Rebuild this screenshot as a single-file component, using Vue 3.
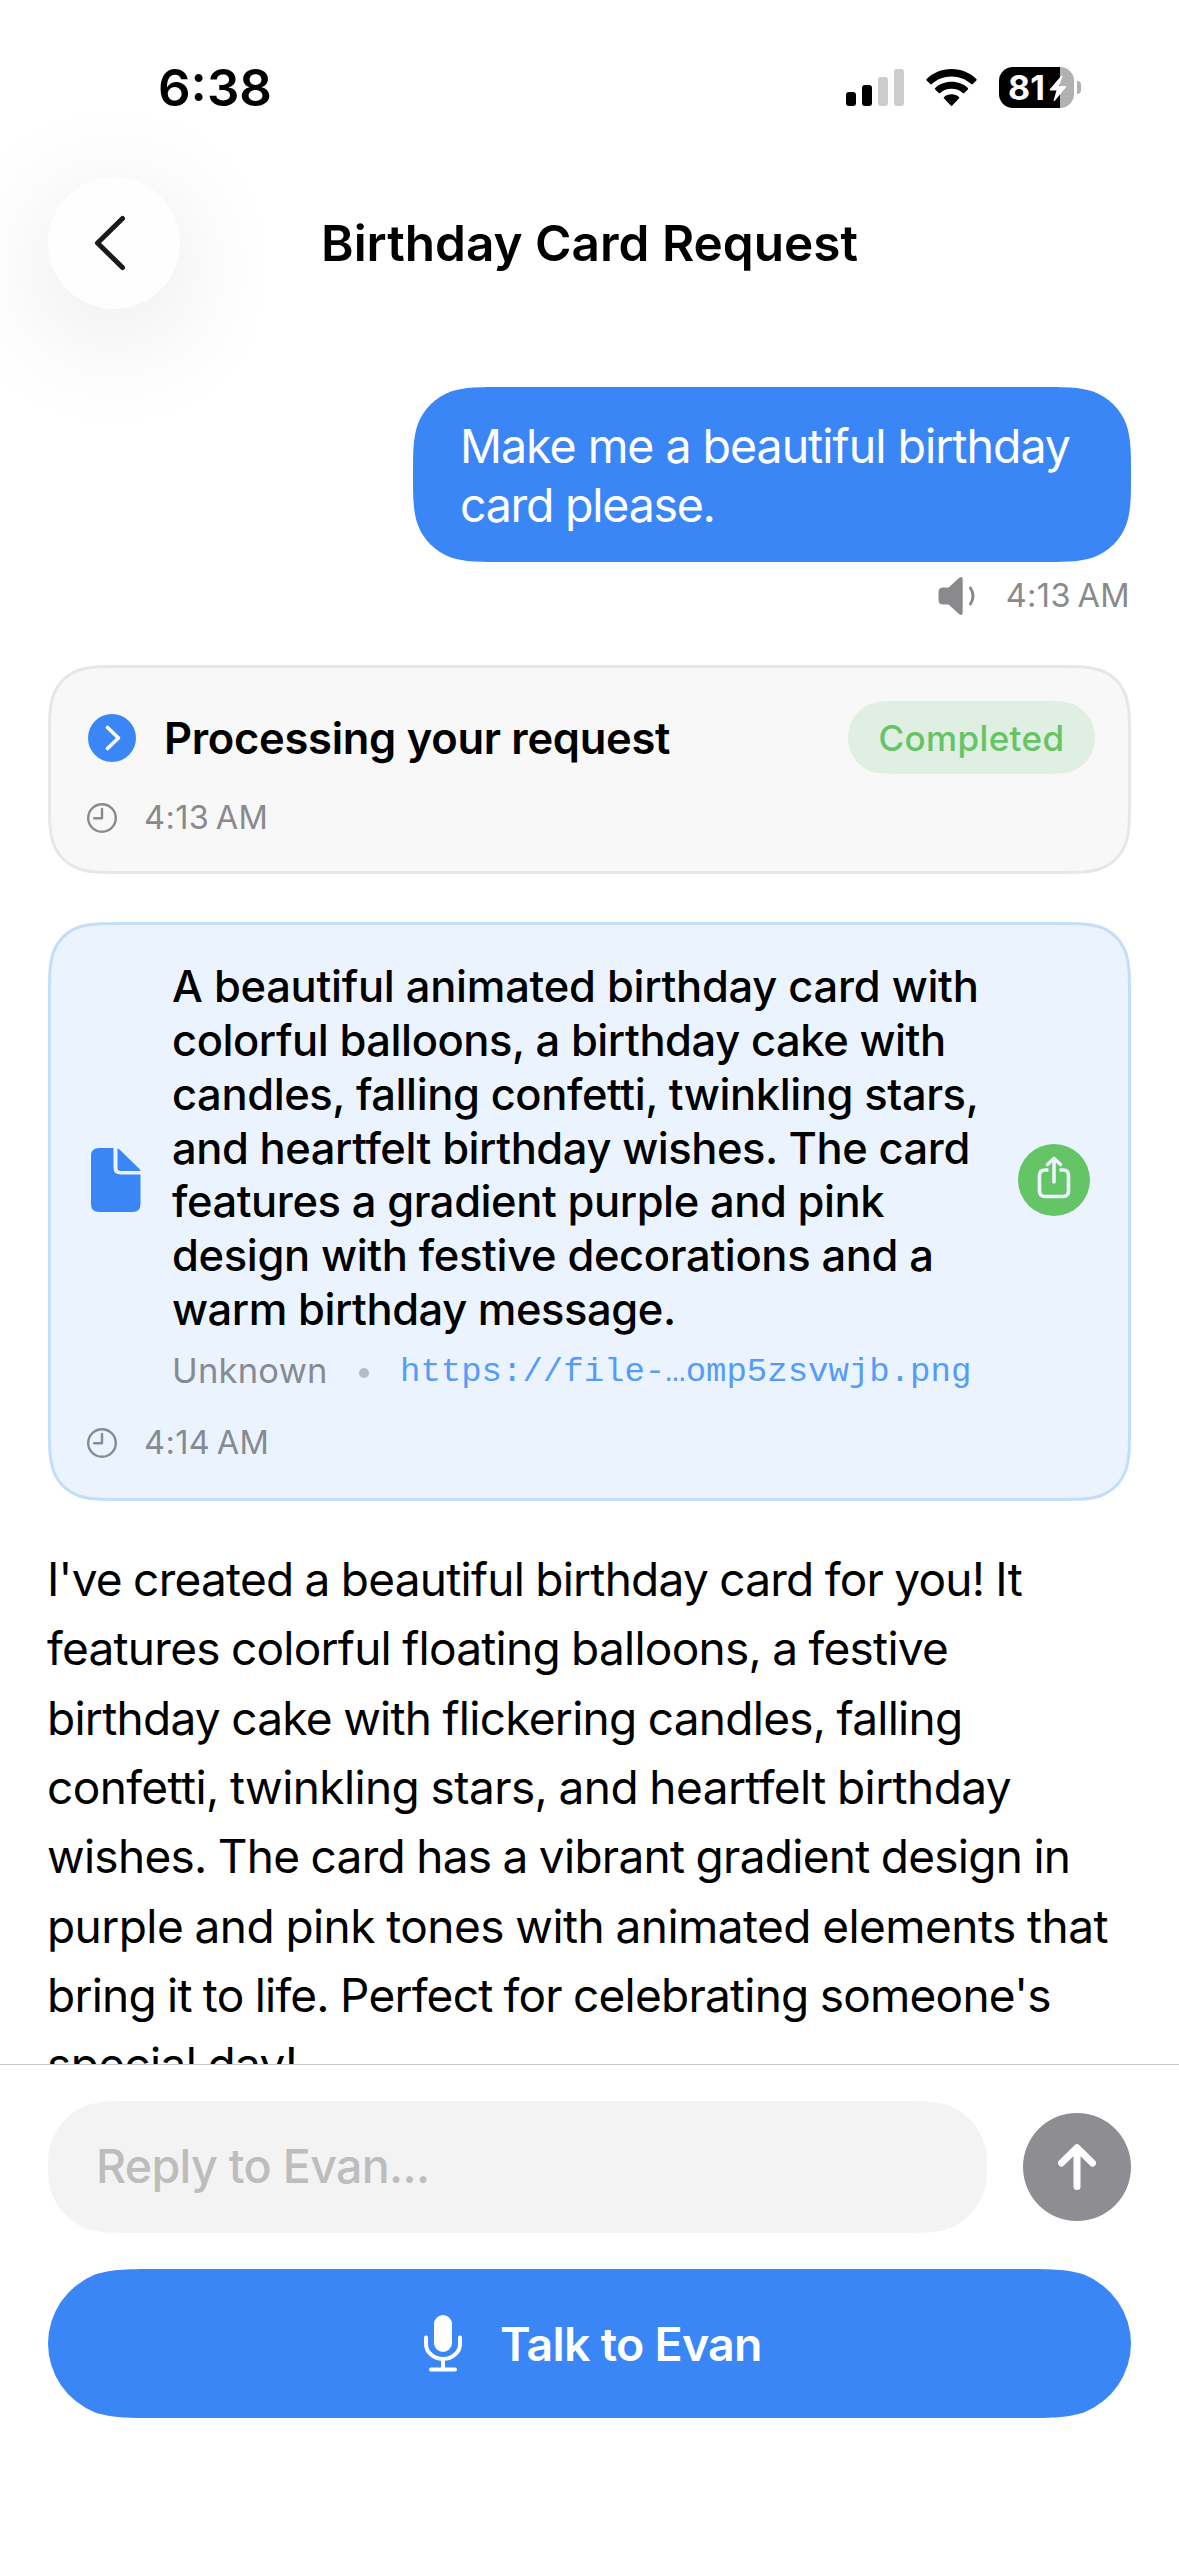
<script setup>
// Outline of a rounded rectangle with continuous corners; low shapes get round pill ends.
function squircle(w, h, r, inset = 0) {
  const x1 = inset, y1 = inset, x2 = w - inset, y2 = h - inset
  const A = 1.52866, B = 1.08849, C = 0.86841, D = 0.63149, E = 0.37282, F = 0.16906, G = 0.07491
  const half = (y2 - y1) / 2 / r
  const pill = half < 1.3
  const L = Math.min(A, half), M = Math.min(B, half)
  const corner = (cx, cy, sx, sy, leaving) => {
    const p = (a, b) => `${(cx + sx * a * r).toFixed(2)} ${(cy + sy * b * r).toFixed(2)}`
    if (leaving) {
      return (pill
        ? `L${p(0, 1)} A${r} ${r} 0 0 1 ${p(D, G)}`
        : `L${p(0, L)} C${p(0, M)} ${p(0, C)} ${p(G, D)} C${p(F, E)} ${p(E, F)} ${p(D, G)}`)
        + ` C${p(C, 0)} ${p(B, 0)} ${p(A, 0)}`
    }
    return `L${p(A, 0)} C${p(B, 0)} ${p(C, 0)} ${p(D, G)} `
      + (pill
        ? `A${r} ${r} 0 0 1 ${p(0, 1)}`
        : `C${p(E, F)} ${p(F, E)} ${p(G, D)} C${p(0, C)} ${p(0, M)} ${p(0, L)}`)
  }
  const d = corner(x1, y1, 1, 1, true) + corner(x2, y1, -1, 1, false)
    + corner(x2, y2, -1, -1, true) + corner(x1, y2, 1, -1, false) + 'Z'
  return 'M' + d.slice(1)
}

const cardLines = [
  { text: 'A beautiful animated birthday card with', track: -0.28 },
  { text: 'colorful balloons, a birthday cake with', track: -0.44 },
  { text: 'candles, falling confetti, twinkling stars,', track: -0.41 },
  { text: 'and heartfelt birthday wishes. The card', track: -0.44 },
  { text: 'features a gradient purple and pink', track: -0.43 },
  { text: 'design with festive decorations and a', track: -0.36 },
  { text: 'warm birthday message.', track: -0.46 },
]
const replyLines = [
  { text: "I've created a beautiful birthday card for you! It", track: -0.75 },
  { text: 'features colorful floating balloons, a festive', track: -0.74 },
  { text: 'birthday cake with flickering candles, falling', track: -0.72 },
  { text: 'confetti, twinkling stars, and heartfelt birthday', track: -0.59 },
  { text: 'wishes. The card has a vibrant gradient design in', track: -0.72 },
  { text: 'purple and pink tones with animated elements that', track: -0.56 },
  { text: "bring it to life. Perfect for celebrating someone's", track: -0.77 },
  { text: 'special day!', track: -0.64 },
]
</script>

<template>
  <div class="screen">
    <main class="scroll">
      <header class="status">
        <span class="clock">6:38</span>
        <div class="indicators">
          <svg class="signal" width="58" height="37" viewBox="0 0 58 37">
            <rect x="0" y="23" width="10" height="14" rx="3" />
            <rect x="16" y="16" width="10" height="21" rx="3" />
            <rect x="32" y="8" width="10" height="29" rx="3" fill="#ccc" />
            <rect x="48" y="0" width="10" height="37" rx="3" fill="#ccc" />
          </svg>
          <svg class="wifi" width="51" height="37" viewBox="0 0 51 37">
            <path d="M25.500 0C35.500 0 44.200 3.800 50.300 10.100a1 1 0 0 1 0 1.500l-3.500 3.500a1.100 1.100 0 0 1-1.600 0C40 10.300 33.200 7.500 25.500 7.500S11 10.300 5.800 15.100a1.100 1.100 0 0 1-1.600 0L.700 11.600a1 1 0 0 1 0-1.500C6.800 3.800 15.500 0 25.500 0z" />
            <path d="M25.500 12.800c6.500 0 12.200 2.300 16.300 6.100a1 1 0 0 1 0 1.500l-3.600 3.500a1.100 1.100 0 0 1-1.500 0c-3-2.600-6.800-4.100-11.200-4.100s-8.200 1.500-11.200 4.100a1.100 1.100 0 0 1-1.500 0l-3.600-3.500a1 1 0 0 1 0-1.500c4.100-3.800 9.800-6.100 16.300-6.100z" />
            <path d="M25.500 25.300c2.900 0 5.500 1 7.400 2.700a1 1 0 0 1 0 1.500l-6.600 7a1.100 1.100 0 0 1-1.600 0l-6.600-7a1 1 0 0 1 0-1.500c1.900-1.700 4.500-2.700 7.400-2.700z" />
          </svg>
          <div class="battery">
            <span>81</span>
            <svg class="bolt" width="18" height="27" viewBox="0 0 18 27">
              <path d="M12.500.500L.800 14.200q-.700 1.300.700 1.300h6L4.600 25.500q.400 1 1.200.300L17 12.200q.600-1.200-.700-1.200h-6L13.500 1.200q-.200-1-1-.700z" />
            </svg>
            <i class="nub"></i>
          </div>
        </div>
      </header>

      <nav class="nav">
        <button class="back" aria-label="Back">
          <svg width="32" height="56" viewBox="0 0 32 56"><path d="M28.500 3.500L3.500 28l25 24.500" /></svg>
        </button>
        <h1>Birthday Card Request</h1>
      </nav>

      <section class="bubble">
        <svg class="shape" width="718" height="175"><path :d="squircle(718, 175, 60)" fill="#3b86f7" /></svg>
        <p class="line-a">Make me a beautiful birthday</p>
        <p class="line-b">card please.</p>
      </section>
      <div class="sent">
        <svg width="38" height="38" viewBox="0 0 38 38">
          <path fill="#8a8a8c" d="M5 10.500h5.500L21 1q3.600-2.400 3.700 1.500v33q-.100 3.900-3.700 1.500L10.500 27.500H5q-4.500 0-4.500-4.500v-8q0-4.500 4.500-4.500z" />
          <path fill="none" stroke="#8a8a8c" stroke-width="3" stroke-linecap="round" d="M32.500 11q5 8 0 16" />
        </svg>
        <time>4:13 AM</time>
      </div>

      <section class="card task">
        <svg class="shape" width="1083" height="209"><path :d="squircle(1083, 209, 47, 1.5)" fill="#f8f8f8" stroke="#e7e7e7" stroke-width="3" /></svg>
        <div class="task-row">
          <svg class="go" width="48" height="48" viewBox="0 0 48 48">
            <circle cx="24" cy="24" r="24" fill="#3b86f7" />
            <path d="M19.500 13.500L30.500 24l-11 10.500" fill="none" stroke="#fff" stroke-width="3.600" stroke-linecap="round" stroke-linejoin="round" />
          </svg>
          <h2>Processing your request</h2>
          <div class="badge">
            <svg class="shape" width="247" height="73"><path :d="squircle(247, 73, 36)" fill="#dfefe1" /></svg>
            <span>Completed</span>
          </div>
        </div>
        <div class="stamp">
          <svg width="30" height="30" viewBox="0 0 30 30"><circle cx="15" cy="15" r="13.800" /><path d="M15 6v9.300H7.200" /></svg>
          <time>4:13 AM</time>
        </div>
      </section>

      <section class="card file">
        <svg class="shape" width="1083" height="579"><path :d="squircle(1083, 579, 47, 1.5)" fill="#ebf4fe" stroke="#c3defa" stroke-width="3" /></svg>
        <div class="file-row">
          <svg class="doc" width="50" height="64" viewBox="0 0 50 64" fill="#3b86f7">
            <path d="M8 0h14.500v19.500q0 7 7 7H49.500V56q0 8-8 8H8q-8 0-8-8V8q0-8 8-8z" />
            <path d="M26.500.500q1 0 2 1L48.500 21q1 1 .900 2H29.500q-3 0-3-3z" />
          </svg>
          <div class="file-main">
            <p v-for="line in cardLines" :key="line.text" :style="{ letterSpacing: line.track + 'px' }">{{ line.text }}</p>
            <div class="meta">
              <span class="kind">Unknown</span>
              <i class="dot"></i>
              <a>https://file-…omp5zsvwjb.png</a>
            </div>
          </div>
          <svg class="share" width="72" height="72" viewBox="0 0 72 72" fill="none" stroke="#ebf4fe" stroke-width="3.600" stroke-linecap="round" stroke-linejoin="round">
            <circle cx="36" cy="36" r="36" fill="#65c466" stroke="none" />
            <path d="M30.500 26H27q-5.500 0-5.500 5.500v15.500q0 5.500 5.500 5.500h18q5.500 0 5.500-5.500V31.500q0-5.500-5.500-5.500h-3.500" stroke-linecap="butt" />
            <path d="M36 38V15M29.500 20.500L36 14.500l6.500 6" />
          </svg>
        </div>
        <div class="stamp">
          <svg width="30" height="30" viewBox="0 0 30 30"><circle cx="15" cy="15" r="13.800" /><path d="M15 6v9.300H7.200" /></svg>
          <time>4:14 AM</time>
        </div>
      </section>

      <article class="answer">
        <p v-for="line in replyLines" :key="line.text" :style="{ letterSpacing: line.track + 'px' }">{{ line.text }}</p>
      </article>
    </main>

    <footer class="composer">
      <div class="entry">
        <div class="field">
          <svg class="shape" width="939" height="132"><path :d="squircle(939, 132, 60)" fill="#f3f3f3" /></svg>
          <span>Reply to Evan...</span>
        </div>
        <button class="send" aria-label="Send">
          <svg width="38" height="46" viewBox="0 0 38 46"><path d="M19 42.500V4M3.500 19L19 3.800 34.500 19" /></svg>
        </button>
      </div>
      <div class="talk">
        <svg class="shape" width="1083" height="149"><path :d="squircle(1083, 149, 74.5)" fill="#3b86f7" /></svg>
        <svg class="mic" width="38" height="57" viewBox="0 0 38 57">
          <rect x="10" y="0" width="18" height="37" rx="9" fill="#fff" />
          <path d="M2 22.500v6.500a17 15 0 0 0 34 0v-6.500M19 44v10.500M7 54.500h24" fill="none" stroke="#fff" stroke-width="4" stroke-linecap="round" />
        </svg>
        <span>Talk to Evan</span>
      </div>
    </footer>
  </div>
</template>

<style>
body { margin: 0; background: #fff; }
</style>

<style scoped>
.screen {
  width: 1179px; height: 2556px; display: flex; flex-direction: column; overflow: hidden;
  background: #fff; color: #000; font-family: Inter, "Liberation Sans", sans-serif;
}
p, h1, h2 { margin: 0; white-space: nowrap; }
button { border: 0; padding: 0; display: flex; align-items: center; justify-content: center; }
svg { display: block; flex: none; }
.shape { position: absolute; left: 0; top: 0; z-index: -1; }
.scroll { height: 2064px; flex: none; overflow: hidden; display: flex; flex-direction: column; }

.status {
  height: 177px; flex: none; box-sizing: border-box; padding: 58px 105px 0 158px;
  display: flex; justify-content: space-between; align-items: flex-start;
}
.clock { font-size: 51px; font-weight: 600; line-height: 60px; position: relative; z-index: 1; }
.indicators { display: flex; align-items: center; height: 59px; }
.wifi { margin-left: 22px; }
.battery {
  position: relative; margin-left: 22px; width: 75px; height: 41px; border-radius: 14px;
  background: linear-gradient(to right, #000 61px, #b1b1b1 61px);
  color: #fff; font-size: 34px; font-weight: 700; line-height: 41px; display: flex; align-items: center;
}
.battery span { margin-left: 9px; }
.bolt { position: absolute; left: 50px; top: 8px; fill: #fff; }
.nub { position: absolute; left: 78px; top: 14px; width: 4px; height: 13px; border-radius: 0 5px 5px 0; background: #b1b1b1; }

.nav { height: 132px; flex: none; display: flex; align-items: center; padding: 0 48px; }
.back { width: 132px; height: 132px; border-radius: 50%; background: #fefefe; box-shadow: 0 24px 120px rgba(0, 0, 0, .11); }
.back svg { margin-right: 9px; fill: none; stroke: #1a1a1a; stroke-width: 5; stroke-linecap: round; stroke-linejoin: round; }
.nav h1 { margin-left: 141px; font-size: 49.5px; font-weight: 600; line-height: 60px; }

.bubble {
  position: relative; z-index: 0; flex: none; box-sizing: border-box; align-self: flex-end;
  width: 718px; height: 175px; margin: 78px 48px 0 0; padding: 30px 0 0 47px;
  color: #fff; font-size: 46.5px; line-height: 58.5px;
}
.line-a { letter-spacing: -1.03px; }
.line-b { letter-spacing: -1.26px; }
.sent { height: 48px; flex: none; margin: 10px 49px 0 0; display: flex; justify-content: flex-end; align-items: center; gap: 30px; }
time { font-size: 32.5px; line-height: 40px; letter-spacing: .4px; word-spacing: -3px; color: #8a8a8c; }

.card { position: relative; z-index: 0; flex: none; box-sizing: border-box; margin: 0 48px; padding: 36px 36px 0 39px; }
.task { height: 209px; margin-top: 45px; }
.file { height: 579px; margin-top: 48px; padding-top: 37px; }
.task-row { display: flex; align-items: center; height: 73px; }
.go { margin-left: 1px; }
.task h2 { margin-left: 28px; font-size: 43.5px; font-weight: 600; line-height: 54px; letter-spacing: -.29px; }
.badge {
  position: relative; z-index: 0; margin-left: auto; width: 247px; height: 73px; display: flex;
  align-items: center; justify-content: center; font-size: 35px; font-weight: 500; letter-spacing: .35px; color: #65c466;
}
.stamp { display: flex; align-items: center; height: 40px; margin-top: 24px; gap: 27px; }
.stamp svg { fill: none; stroke: #8a8a8c; stroke-width: 2.4; stroke-linecap: round; stroke-linejoin: round; }
.file .stamp { margin-top: 22.5px; }
.file .stamp svg { stroke: #858b92; }
.file .stamp time { color: #858b92; }

.file-row { display: flex; align-items: center; }
.doc { margin-left: 4px; }
.file-main { margin-left: 31px; width: 846px; padding: 1px 0 4px; }
.file-main p { font-size: 43.5px; font-weight: 500; line-height: 53.85px; }
.meta { display: flex; align-items: center; height: 52px; margin-top: 8px; color: #858b92; font-size: 34.5px; letter-spacing: .24px; }
.kind { width: 157px; }
.dot { width: 10px; height: 10px; border-radius: 50%; background: #b6bcc5; margin: 4px 0 0 30px; }
.meta a { margin: 2px 0 0 31px; font: 34px "Liberation Mono", monospace; letter-spacing: 0; color: #559cf8; white-space: nowrap; }

.answer { margin: 44px 0 0 47px; font-size: 46px; line-height: 69.33px; word-spacing: -1px; }

.composer { border-top: 1px solid #c6c6c8; padding: 36px 48px 0; background: #fff; }
.entry { display: flex; align-items: center; justify-content: space-between; }
.field {
  position: relative; z-index: 0; box-sizing: border-box; width: 939px; height: 132px; padding: 0 0 2px 48px;
  display: flex; align-items: center; font-size: 46.5px; font-weight: 500; letter-spacing: -.65px; color: #bdbdbd;
}
.send { width: 108px; height: 108px; border-radius: 50%; background: #8e8d92; }
.send svg { fill: none; stroke: #fff; stroke-width: 7; stroke-linecap: round; stroke-linejoin: round; }
.talk {
  position: relative; z-index: 0; height: 149px; margin-top: 36px; display: flex; align-items: center;
  color: #fff; font-size: 46.5px; font-weight: 600; letter-spacing: -.73px;
}
.mic { margin-left: 376px; }
.talk span { margin-left: 38px; white-space: nowrap; }
</style>
